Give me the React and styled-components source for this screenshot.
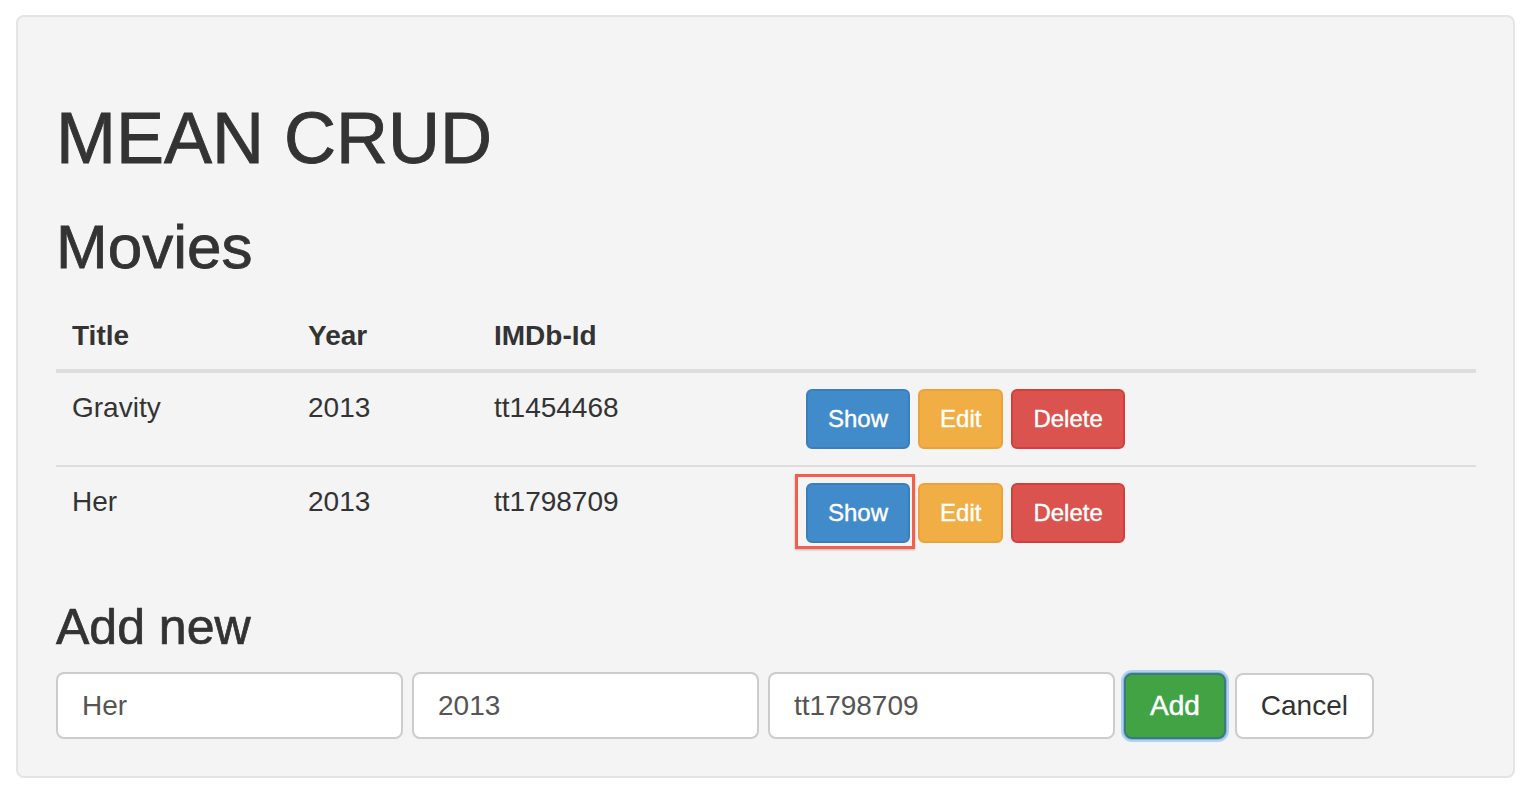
import React from "react";
import styled, { createGlobalStyle, css } from "styled-components";

const Global = createGlobalStyle`
  html, body { margin: 0; padding: 0; background: #ffffff; }
  body {
    font-family: "Liberation Sans", Helvetica, Arial, sans-serif;
    color: #333333;
  }
  * { box-sizing: border-box; }
`;

const Page = styled.div`
  padding: 15px 15px 25px 16px;
`;

const Panel = styled.div`
  background: #f4f4f4;
  border: 2px solid #e4e4e4;
  border-radius: 8px;
  padding: 82px 37px 37px 38px;
`;

const headingBase = css`
  font-weight: 400;
  color: #333;
  -webkit-text-stroke: ${(p) => p.$stroke || "0.6px"} #333;
`;

const Title = styled.h1`
  margin: 0;
  font-size: 72px;
  line-height: 79px;
  ${headingBase}
  -webkit-text-stroke: 0.9px #333;
`;

const SubTitle = styled.h2`
  margin: 35px 0 0;
  font-size: 62px;
  line-height: 68px;
  ${headingBase}
  -webkit-text-stroke: 0.8px #333;
`;

const SectionTitle = styled.h3`
  margin: 41px 0 0;
  font-size: 50px;
  line-height: 54px;
  ${headingBase}
  -webkit-text-stroke: 0.7px #333;
`;

const Table = styled.table`
  margin-top: 19px;
  width: 100%;
  border-collapse: separate;
  border-spacing: 0;
  font-size: 28px;
  line-height: 40px;
`;

const Th = styled.th`
  width: ${(p) => p.$w || "auto"};
  text-align: left;
  font-weight: 700;
  padding: 16px 16px 13px;
  border-bottom: 4px solid #dddddd;
  vertical-align: bottom;
`;

const Td = styled.td`
  padding: 15px 16px 16px;
  vertical-align: top;
  border-top: ${(p) => (p.$first ? "0" : "2px solid #dddddd")};
`;

const Actions = styled.div`
  display: flex;
  gap: 8px;
  padding-top: 1px;
`;

const variants = {
  primary: css`
    background: #418bca;
    border-color: #3a7ebd;
    color: #fff;
  `,
  warning: css`
    background: #f1ae44;
    border-color: #eea236;
    color: #fff;
  `,
  danger: css`
    background: #da534e;
    border-color: #d43f3a;
    color: #fff;
  `,
  success: css`
    background: #42a345;
    border-color: #3b7d74;
    color: #fff;
    box-shadow: 0 0 0 1px #7fb2e5, 0 0 0 3px #b4d2f0;
  `,
  default: css`
    background: #fff;
    border-color: #cccccc;
    color: #333;
  `,
};

const SmallButton = styled.button`
  display: inline-flex;
  align-items: center;
  justify-content: center;
  height: 60px;
  padding: 0 20px;
  border: 2px solid;
  border-radius: 6px;
  font-family: "Liberation Sans", Helvetica, Arial, sans-serif;
  font-size: 24px;
  -webkit-text-stroke: 0.4px #fff;
  ${(p) => variants[p.$variant]}
`;

const Highlight = styled.span`
  position: relative;
  display: inline-flex;
  &::after {
    content: "";
    position: absolute;
    top: -9px;
    left: -11px;
    right: -5px;
    bottom: -6px;
    border: 3px solid #f2604d;
    box-shadow: 0 1px 2px rgba(0, 0, 0, 0.25);
    pointer-events: none;
  }
`;

const FormRow = styled.div`
  margin-top: 18px;
  display: flex;
  gap: 9px;
  align-items: center;
`;

const Input = styled.input`
  width: 347px;
  height: 67px;
  padding: 0 24px;
  border: 2px solid #cccccc;
  border-radius: 8px;
  background: #fff;
  font-family: "Liberation Sans", Helvetica, Arial, sans-serif;
  font-size: 28px;
  color: #555;
  outline: none;
`;

const FormButton = styled.button`
  height: 66px;
  padding: 0 24px;
  border: 2px solid;
  border-radius: 8px;
  font-family: "Liberation Sans", Helvetica, Arial, sans-serif;
  font-size: 28px;
  ${(p) => variants[p.$variant]}
  ${(p) =>
    p.$variant === "success" &&
    css`
      -webkit-text-stroke: 0.5px #fff;
    `}
`;

const movies = [
  { title: "Gravity", year: "2013", id: "tt1454468" },
  { title: "Her", year: "2013", id: "tt1798709", highlight: true },
];

export default function App() {
  return (
    <>
      <Global />
      <Page>
        <Panel>
          <Title>MEAN CRUD</Title>
          <SubTitle>Movies</SubTitle>
          <Table>
            <thead>
              <tr>
                <Th $w="236px">Title</Th>
                <Th $w="186px">Year</Th>
                <Th $w="312px">IMDb-Id</Th>
                <Th />
              </tr>
            </thead>
            <tbody>
              {movies.map((m, i) => (
                <tr key={m.id}>
                  <Td $first={i === 0}>{m.title}</Td>
                  <Td $first={i === 0}>{m.year}</Td>
                  <Td $first={i === 0}>{m.id}</Td>
                  <Td $first={i === 0}>
                    <Actions>
                      {m.highlight ? (
                        <Highlight>
                          <SmallButton $variant="primary">Show</SmallButton>
                        </Highlight>
                      ) : (
                        <SmallButton $variant="primary">Show</SmallButton>
                      )}
                      <SmallButton $variant="warning">Edit</SmallButton>
                      <SmallButton $variant="danger">Delete</SmallButton>
                    </Actions>
                  </Td>
                </tr>
              ))}
            </tbody>
          </Table>
          <SectionTitle>Add new</SectionTitle>
          <FormRow>
            <Input defaultValue="Her" />
            <Input defaultValue="2013" />
            <Input defaultValue="tt1798709" />
            <FormButton $variant="success">Add</FormButton>
            <FormButton $variant="default">Cancel</FormButton>
          </FormRow>
        </Panel>
      </Page>
    </>
  );
}
